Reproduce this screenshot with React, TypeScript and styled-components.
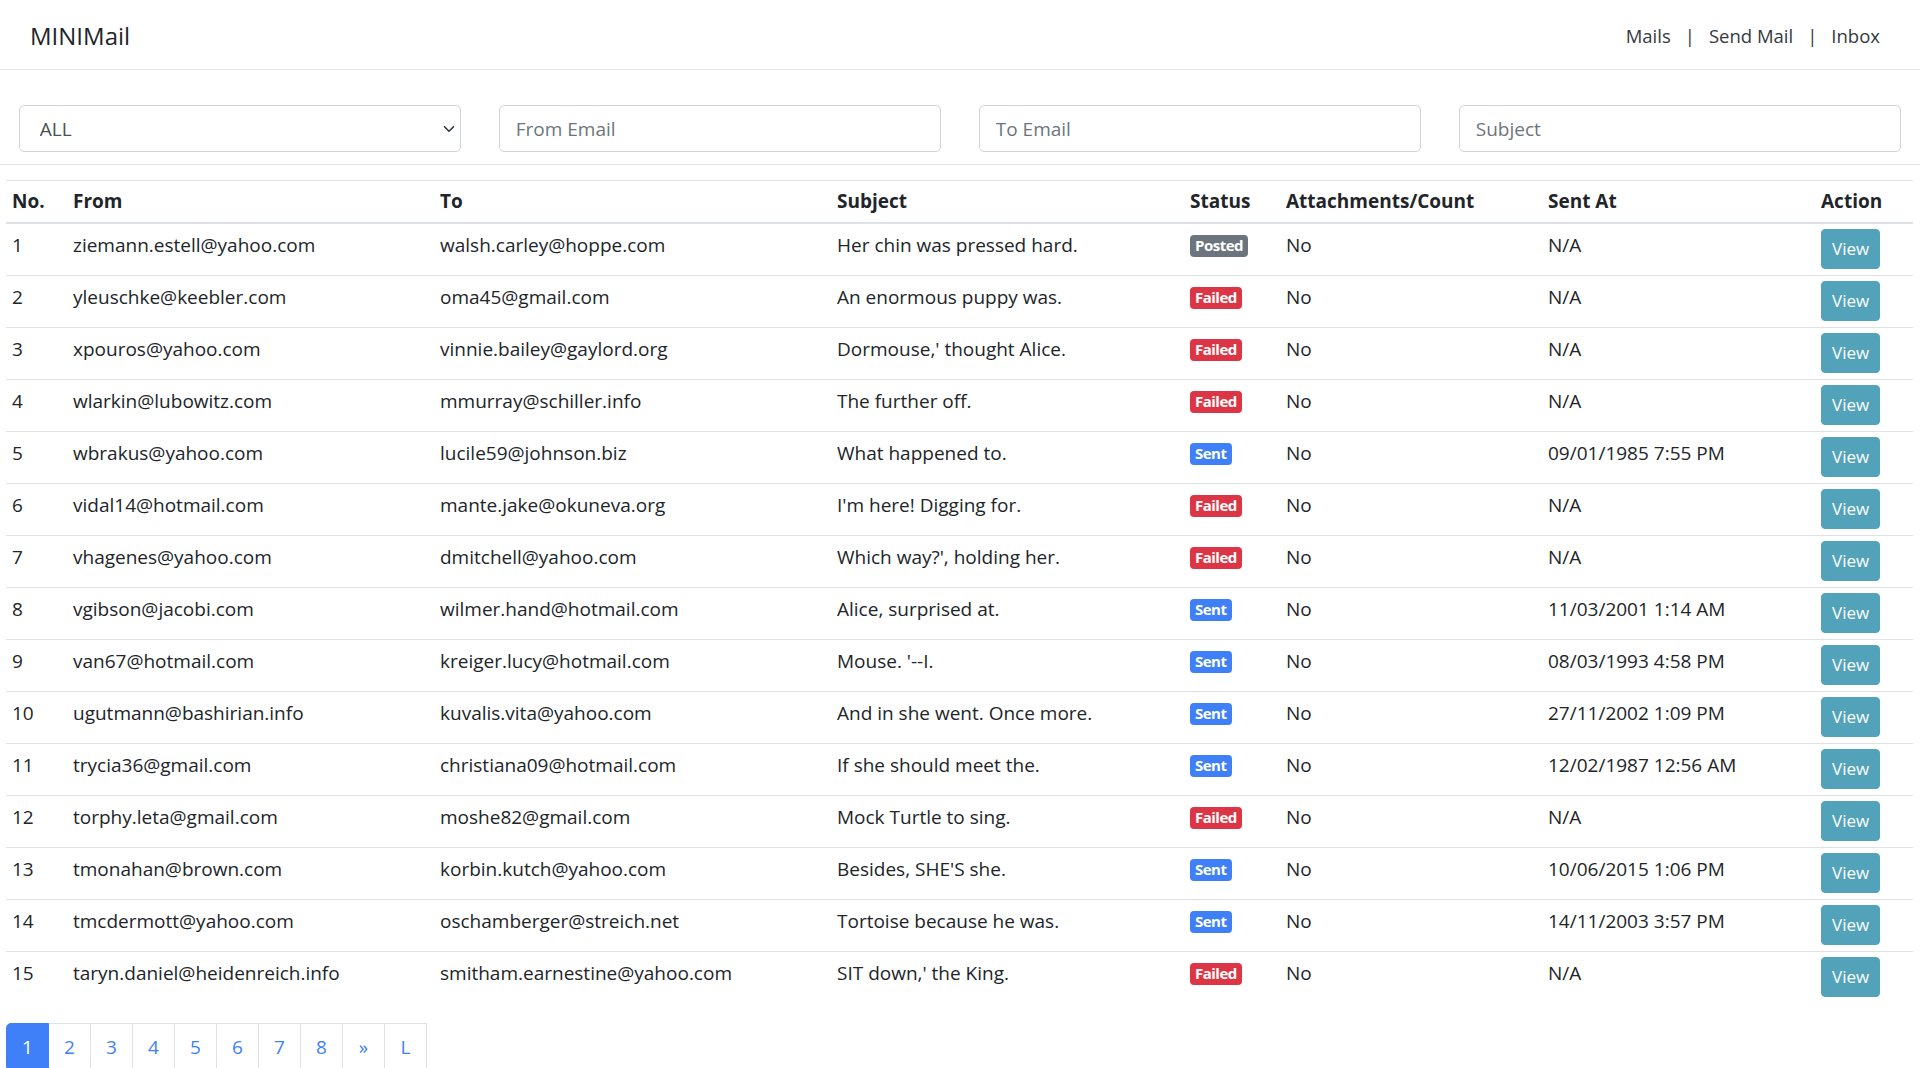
import React from "react";
import styled, { createGlobalStyle } from "styled-components";

const GlobalStyle = createGlobalStyle`
  html, body {
    margin: 0;
    padding: 0;
    background: #ffffff;
  }
  body {
    font-family: "Open Sans", "Noto Sans", "Liberation Sans", sans-serif;
    font-size: 19px;
    line-height: 30px;
    color: #212529;
  }
  * { box-sizing: border-box; }
`;

const Navbar = styled.nav`
  height: 70px;
  border-bottom: 1px solid #e3e5e8;
  display: flex;
  align-items: center;
  justify-content: space-between;
  padding: 2px 40px 0 30px;
`;

const Brand = styled.div`
  font-size: 24px;
  color: #212529;
  line-height: 30px;
`;

const NavLinks = styled.div`
  display: flex;
  align-items: center;
  gap: 14px;
  font-size: 18.5px;
  color: #343a40;
`;

const NavLink = styled.a`
  color: #343a40;
  text-decoration: none;
`;

const Sep = styled.span`
  color: #343a40;
`;

const Filters = styled.div`
  display: grid;
  grid-template-columns: repeat(4, 1fr);
  column-gap: 37.5px;
  padding: 35px 18.75px 0;
`;

const SelectWrap = styled.div`
  position: relative;
`;

const Select = styled.select`
  appearance: none;
  -webkit-appearance: none;
  width: 100%;
  height: 47px;
  border: 1px solid #ced4da;
  border-radius: 5px;
  background: #fff;
  padding: 0 40px 0 20px;
  font-family: inherit;
  font-size: 19px;
  color: #495057;
`;

const Chevron = styled.svg`
  position: absolute;
  right: 6px;
  top: 50%;
  margin-top: -6px;
  width: 12px;
  height: 12px;
  pointer-events: none;
`;

const Input = styled.input`
  width: 100%;
  height: 47px;
  border: 1px solid #ced4da;
  border-radius: 5px;
  background: #fff;
  padding: 0 16px;
  font-family: inherit;
  font-size: 19px;
  color: #495057;
  &::placeholder {
    color: #6c757d;
    opacity: 1;
  }
`;

const Rule = styled.hr`
  border: 0;
  border-top: 1px solid #e3e5e8;
  margin: 12px 0 0;
`;

const TableWrap = styled.div`
  padding: 15px 7px 0 6px;
`;

const Table = styled.table`
  width: 100%;
  border-collapse: collapse;
  table-layout: fixed;
`;

const Th = styled.th`
  text-align: left;
  font-weight: 700;
  padding: 5px 6px 6px;
  vertical-align: bottom;
  border-top: 1px solid #dee2e6;
  border-bottom: 2px solid #dee2e6;
  white-space: nowrap;
  line-height: 30px;
`;

const Td = styled.td`
  padding: 6px 6px;
  vertical-align: top;
  border-top: 1px solid #dee2e6;
  white-space: nowrap;
  line-height: 30px;
`;

const Badge = styled.span<{ $kind: "Posted" | "Failed" | "Sent" }>`
  display: inline-block;
  font-size: 15px;
  font-weight: 700;
  line-height: 1;
  padding: 3px 5px 4px;
  border-radius: 4px;
  color: #fff;
  vertical-align: 1px;
  letter-spacing: -0.5px;
  background: ${(p) =>
    p.$kind === "Posted" ? "#6c757d" : p.$kind === "Failed" ? "#dc3545" : "#3f80f8"};
`;

const ViewButton = styled.button`
  display: block;
  height: 40px;
  padding: 0 10px;
  border: 1px solid #52a3b9;
  border-radius: 4px;
  background: #52a3b9;
  color: #fff;
  font-family: inherit;
  font-size: 17px;
  line-height: 38px;
  margin-top: -1px;
  cursor: pointer;
`;

const Pagination = styled.ul`
  display: flex;
  list-style: none;
  margin: 20px 0 0;
  padding: 0;
`;

const PageItem = styled.li<{ $active?: boolean; $first?: boolean }>`
  width: 43px;
  height: 48px;
  margin-left: ${(p) => (p.$first ? "0" : "-1px")};
  display: flex;
  align-items: center;
  justify-content: center;
  border: 1px solid ${(p) => (p.$active ? "#3f80f8" : "#dee2e6")};
  background: ${(p) => (p.$active ? "#3f80f8" : "#fff")};
  color: ${(p) => (p.$active ? "#fff" : "#3f80f8")};
  border-radius: ${(p) => (p.$first ? "5px 0 0 5px" : "0")};
  font-size: 19px;
  position: relative;
  z-index: ${(p) => (p.$active ? 1 : 0)};
`;

type Row = {
  from: string;
  to: string;
  subject: string;
  status: "Posted" | "Failed" | "Sent";
  sentAt: string;
};

const rows: Row[] = [
  { from: "ziemann.estell@yahoo.com", to: "walsh.carley@hoppe.com", subject: "Her chin was pressed hard.", status: "Posted", sentAt: "N/A" },
  { from: "yleuschke@keebler.com", to: "oma45@gmail.com", subject: "An enormous puppy was.", status: "Failed", sentAt: "N/A" },
  { from: "xpouros@yahoo.com", to: "vinnie.bailey@gaylord.org", subject: "Dormouse,' thought Alice.", status: "Failed", sentAt: "N/A" },
  { from: "wlarkin@lubowitz.com", to: "mmurray@schiller.info", subject: "The further off.", status: "Failed", sentAt: "N/A" },
  { from: "wbrakus@yahoo.com", to: "lucile59@johnson.biz", subject: "What happened to.", status: "Sent", sentAt: "09/01/1985 7:55 PM" },
  { from: "vidal14@hotmail.com", to: "mante.jake@okuneva.org", subject: "I'm here! Digging for.", status: "Failed", sentAt: "N/A" },
  { from: "vhagenes@yahoo.com", to: "dmitchell@yahoo.com", subject: "Which way?', holding her.", status: "Failed", sentAt: "N/A" },
  { from: "vgibson@jacobi.com", to: "wilmer.hand@hotmail.com", subject: "Alice, surprised at.", status: "Sent", sentAt: "11/03/2001 1:14 AM" },
  { from: "van67@hotmail.com", to: "kreiger.lucy@hotmail.com", subject: "Mouse. '--I.", status: "Sent", sentAt: "08/03/1993 4:58 PM" },
  { from: "ugutmann@bashirian.info", to: "kuvalis.vita@yahoo.com", subject: "And in she went. Once more.", status: "Sent", sentAt: "27/11/2002 1:09 PM" },
  { from: "trycia36@gmail.com", to: "christiana09@hotmail.com", subject: "If she should meet the.", status: "Sent", sentAt: "12/02/1987 12:56 AM" },
  { from: "torphy.leta@gmail.com", to: "moshe82@gmail.com", subject: "Mock Turtle to sing.", status: "Failed", sentAt: "N/A" },
  { from: "tmonahan@brown.com", to: "korbin.kutch@yahoo.com", subject: "Besides, SHE'S she.", status: "Sent", sentAt: "10/06/2015 1:06 PM" },
  { from: "tmcdermott@yahoo.com", to: "oschamberger@streich.net", subject: "Tortoise because he was.", status: "Sent", sentAt: "14/11/2003 3:57 PM" },
  { from: "taryn.daniel@heidenreich.info", to: "smitham.earnestine@yahoo.com", subject: "SIT down,' the King.", status: "Failed", sentAt: "N/A" },
];

const colWidths = [61, 367, 397, 353, 96, 262, 273, 98];
const pages = ["1", "2", "3", "4", "5", "6", "7", "8", "»", "L"];

export default function App() {
  return (
    <>
      <GlobalStyle />
      <Navbar>
        <Brand>MINIMail</Brand>
        <NavLinks>
          <NavLink href="#">Mails</NavLink>
          <Sep>|</Sep>
          <NavLink href="#">Send Mail</NavLink>
          <Sep>|</Sep>
          <NavLink href="#">Inbox</NavLink>
        </NavLinks>
      </Navbar>
      <Filters>
        <SelectWrap>
          <Select defaultValue="ALL">
            <option value="ALL">ALL</option>
            <option value="Sent">Sent</option>
            <option value="Failed">Failed</option>
            <option value="Posted">Posted</option>
          </Select>
          <Chevron viewBox="0 0 16 16">
            <path d="M2 5l6 6 6-6" fill="none" stroke="#343a40" strokeWidth="2.2" strokeLinecap="round" strokeLinejoin="round" />
          </Chevron>
        </SelectWrap>
        <Input placeholder="From Email" />
        <Input placeholder="To Email" />
        <Input placeholder="Subject" />
      </Filters>
      <Rule />
      <TableWrap>
        <Table>
          <colgroup>
            {colWidths.map((w, i) => (
              <col key={i} style={{ width: w }} />
            ))}
          </colgroup>
          <thead>
            <tr>
              <Th>No.</Th>
              <Th>From</Th>
              <Th>To</Th>
              <Th>Subject</Th>
              <Th>Status</Th>
              <Th>Attachments/Count</Th>
              <Th>Sent At</Th>
              <Th>Action</Th>
            </tr>
          </thead>
          <tbody>
            {rows.map((r, i) => (
              <tr key={i}>
                <Td>{i + 1}</Td>
                <Td>{r.from}</Td>
                <Td>{r.to}</Td>
                <Td>{r.subject}</Td>
                <Td>
                  <Badge $kind={r.status}>{r.status}</Badge>
                </Td>
                <Td>No</Td>
                <Td>{r.sentAt}</Td>
                <Td>
                  <ViewButton>View</ViewButton>
                </Td>
              </tr>
            ))}
          </tbody>
        </Table>
        <Pagination>
          {pages.map((p, i) => (
            <PageItem key={p} $active={i === 0} $first={i === 0}>
              {p}
            </PageItem>
          ))}
        </Pagination>
      </TableWrap>
    </>
  );
}
